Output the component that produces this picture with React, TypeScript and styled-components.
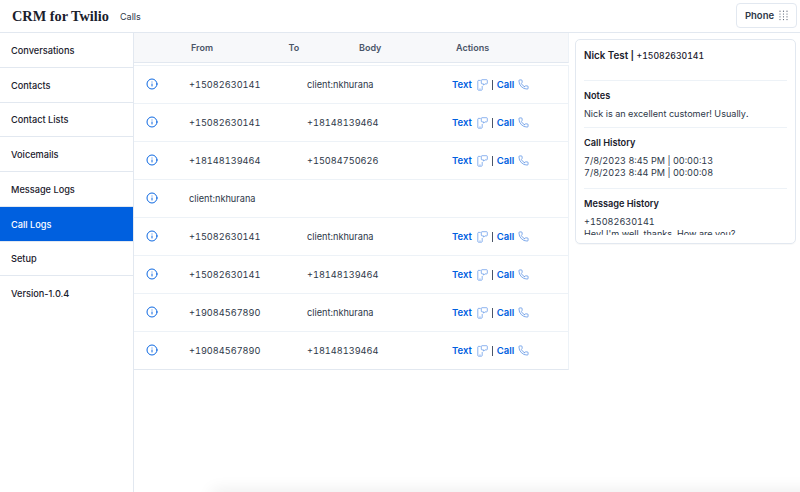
import React from 'react'
import styled, { createGlobalStyle } from 'styled-components'
import { Info, Phone } from 'lucide-react'

const GlobalStyle = createGlobalStyle`
  html, body {
    margin: 0;
    padding: 0;
    height: 100%;
    overflow: hidden;
    background: #fff;
    font-family: Inter, "Liberation Sans", sans-serif;
    color: #1a202c;
  }
  * { box-sizing: border-box; }
`

const Page = styled.div`
  position: relative;
  width: 800px;
  height: 492px;
  display: flex;
  flex-direction: column;
  overflow: hidden;
`

const Header = styled.header`
  height: 33px;
  flex: none;
  display: flex;
  align-items: center;
  padding: 0 3px 0 12px;
  border-bottom: 1px solid #e2e8f0;
`

const Logo = styled.div`
  font-family: "Liberation Serif", serif;
  font-weight: 700;
  font-size: 14.3px;
  color: #1a202c;
  width: 108px;
`

const Crumb = styled.div`
  font-size: 9px;
  color: #2d3748;
  flex: 1;
`

const PhoneButton = styled.button`
  width: 61px;
  height: 25px;
  margin-top: -2px;
  display: flex;
  align-items: center;
  justify-content: center;
  gap: 5px;
  background: #fff;
  border: 1px solid #e2e8f0;
  border-radius: 4px;
  font-family: inherit;
  font-size: 9.5px;
  font-weight: 600;
  color: #2d3748;
  padding: 0;
`

const Body = styled.div`
  flex: 1;
  display: flex;
  min-height: 0;
`

const Sidebar = styled.nav`
  width: 134px;
  flex: none;
  border-right: 1px solid #e2e8f0;
`

const NavItem = styled.div<{ $active?: boolean; $last?: boolean }>`
  height: 34.75px;
  display: flex;
  align-items: center;
  padding: ${({ $last }) => ($last ? '0' : '1px')} 0 0 11px;
  font-size: 9.2px;
  font-weight: 500;
  color: ${({ $active }) => ($active ? '#fff' : '#1a202c')};
  background: ${({ $active }) => ($active ? '#0060df' : '#fff')};
  border-bottom: ${({ $last }) => ($last ? 'none' : '1px solid #e2e8f0')};
`

const Main = styled.main`
  width: 435px;
  flex: none;
`

const TableHead = styled.div`
  height: 30px;
  display: grid;
  grid-template-columns: 57px 97.5px 70.5px 97px 1fr;
  align-items: center;
  background: #f7f8fa;
  border-bottom: 1px solid #e2e8f0;
  border-right: 1px solid #edf2f7;
  font-size: 9px;
  font-weight: 600;
  color: #4a5568;
`

const Rows = styled.div`
  margin-top: 2px;
  border: 1px solid #edf2f7;
  border-left: none;
  border-bottom: 1px solid #e2e8f0;
`

const Row = styled.div`
  height: 38px;
  padding: 0 0 0 12px;
  display: grid;
  grid-template-columns: 43px 118px 145px 1fr;
  align-items: center;
  font-size: 9.2px;
  font-variant-numeric: tabular-nums;
  color: #2d3748;
  border-bottom: 1px solid #edf2f7;
  &:last-child {
    height: 37px;
    border-bottom: none;
  }
`

const InfoCell = styled.div`
  display: flex;
  align-items: center;
  height: 14px;
  margin-top: -2px;
  color: #0060df;
`

const Actions = styled.div`
  display: flex;
  align-items: center;
  font-size: 9.5px;
  font-weight: 600;
  color: #0060df;
`

const Divider = styled.span`
  width: 1px;
  height: 10px;
  background: #4a5568;
  margin: 0 4px 0 4px;
`

const Panel = styled.aside`
  width: 221px;
  height: 205px;
  margin: 6px 0 0 6px;
  padding: 10px 8px 0;
  flex: none;
  border: 1px solid #e2e8f0;
  border-radius: 5px;
  overflow: hidden;
  box-shadow: 0 1px 1px rgba(0, 0, 0, 0.03);
`

const PanelInner = styled.div`
  height: 185px;
  overflow: hidden;
`

const PanelTitle = styled.div`
  display: flex;
  align-items: baseline;
  height: 30px;
  font-size: 9.8px;
  font-weight: 600;
  color: #1a202c;
  white-space: pre;
`

const PanelPhone = styled.span`
  font-size: 8.7px;
  font-weight: 500;
  font-variant-numeric: tabular-nums;
`

const Section = styled.section<{ $height: number }>`
  height: ${({ $height }) => $height}px;
  padding-top: 8px;
  border-top: 1px solid #edf2f7;
`

const SectionTitle = styled.div`
  font-size: 9.2px;
  font-weight: 600;
  line-height: 13px;
  margin-bottom: 5.5px;
  color: #1a202c;
`

const SectionText = styled.div`
  font-size: 9.1px;
  line-height: 12.5px;
  font-variant-numeric: tabular-nums;
  color: #2d3748;
  white-space: nowrap;
`

const BottomGlow = styled.div`
  position: absolute;
  left: 212px;
  right: -20px;
  bottom: -14px;
  height: 14px;
  box-shadow: 0 -2px 16px rgba(0, 0, 0, 0.08);
`

const DialPad = () => (
  <svg width="9" height="11" viewBox="0 0 9 11" fill="#4a5568">
    {[0, 1, 2, 3].flatMap((r) =>
      [0, 1, 2].map((c) => (
        <circle key={`${r}-${c}`} cx={1 + c * 3.5} cy={1.2 + r * 2.8} r="0.6" />
      )),
    )}
  </svg>
)

const TextIcon = () => (
  <svg width="11" height="12" viewBox="0 0 11 12" fill="none" stroke="#5b93e8" strokeWidth="0.7" style={{ marginLeft: 5 }}>
    <path d="M3.6 1.4H1.5c-.4 0-.7.3-.7.7v8.4c0 .4.3.7.7.7h3c.4 0 .7-.3.7-.7V7" />
    <path d="M2.4 10h1.2" />
    <path d="M5 .7h4.6c.4 0 .7.3.7.7v2.8c0 .4-.3.7-.7.7H7.9L6.6 6.2V4.9H5c-.4 0-.7-.3-.7-.7V1.4c0-.4.3-.7.7-.7z" />
  </svg>
)

const rows = [
  ['+15082630141', 'client:nkhurana', true],
  ['+15082630141', '+18148139464', true],
  ['+18148139464', '+15084750626', true],
  ['client:nkhurana', '', false],
  ['+15082630141', 'client:nkhurana', true],
  ['+15082630141', '+18148139464', true],
  ['+19084567890', 'client:nkhurana', true],
  ['+19084567890', '+18148139464', true],
] as const

const nav = ['Conversations', 'Contacts', 'Contact Lists', 'Voicemails', 'Message Logs', 'Call Logs', 'Setup', 'Version-1.0.4']

export default function App() {
  return (
    <Page>
      <GlobalStyle />
      <Header>
        <Logo>CRM for Twilio</Logo>
        <Crumb>Calls</Crumb>
        <PhoneButton>
          Phone <DialPad />
        </PhoneButton>
      </Header>
      <Body>
        <Sidebar>
          {nav.map((item) => (
            <NavItem key={item} $active={item === 'Call Logs'} $last={item === 'Version-1.0.4'}>
              {item}
            </NavItem>
          ))}
        </Sidebar>
        <Main>
          <TableHead>
            <span />
            <span>From</span>
            <span>To</span>
            <span>Body</span>
            <span>Actions</span>
          </TableHead>
          <Rows>
            {rows.map(([from, to, actions], i) => (
              <Row key={i}>
                <InfoCell>
                  <Info size={12} strokeWidth={1.9} />
                </InfoCell>
                <span>{from}</span>
                <span>{to}</span>
                {actions ? (
                  <Actions>
                    Text
                    <TextIcon />
                    <Divider />
                    Call
                    <Phone size={11} strokeWidth={1.4} color="#3b7de0" style={{ marginLeft: 4 }} />
                  </Actions>
                ) : (
                  <span />
                )}
              </Row>
            ))}
          </Rows>
        </Main>
        <Panel>
          <PanelInner>
            <PanelTitle>
              Nick Test | <PanelPhone>+15082630141</PanelPhone>
            </PanelTitle>
            <Section $height={47}>
              <SectionTitle>Notes</SectionTitle>
              <SectionText>Nick is an excellent customer! Usually.</SectionText>
            </Section>
            <Section $height={61}>
              <SectionTitle>Call History</SectionTitle>
              <SectionText>7/8/2023 8:45 PM | 00:00:13</SectionText>
              <SectionText>7/8/2023 8:44 PM | 00:00:08</SectionText>
            </Section>
            <Section $height={60}>
              <SectionTitle>Message History</SectionTitle>
              <SectionText>+15082630141</SectionText>
              <SectionText>Hey! I'm well, thanks. How are you?</SectionText>
            </Section>
          </PanelInner>
        </Panel>
      </Body>
      <BottomGlow />
    </Page>
  )
}
